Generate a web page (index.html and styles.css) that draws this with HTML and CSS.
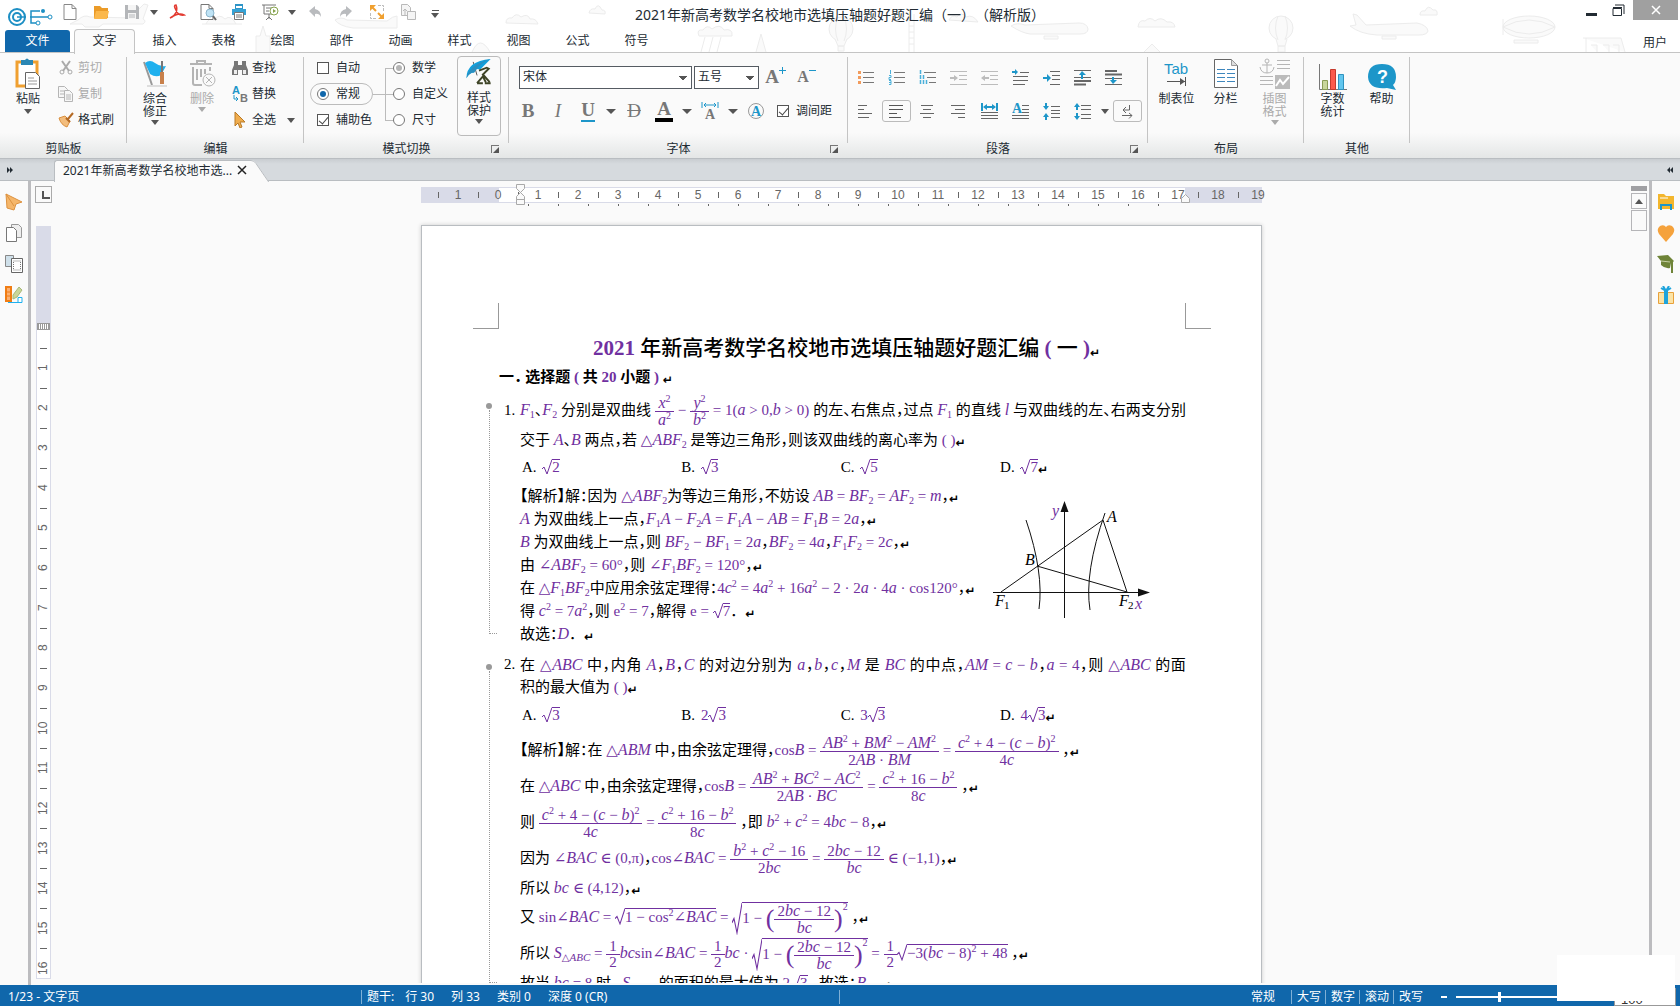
FILE: index.html
```
<!DOCTYPE html>
<html lang="zh-CN">
<head>
    <meta charset="utf-8">
    <title>2021年新高考数学名校地市选填压轴题好题汇编</title>
    <link rel="stylesheet" href="styles.css">
</head>
<body>
    <header class="top">
        <!-- 背景装饰 -->
        <svg class="doodle" width="1680" height="52" viewBox="0 0 1680 52" fill="#fafafa" stroke="#ececec">
            <path d="M78 20q6-6 12-3l44 1q4-10 10-14l4 1-5 14q4 2 0 5h-40l-4 3h-14l-3-3h-12z"/>
            <path d="M335 20q6-4 12 0l40 1q6-5 10-5v12h-44q-14-2-18-8z"/>
            <path d="M202 24h40M206 24q3-7 8-4 5-7 11-1 6-5 11 5M506 23q0-6 6-5 4-6 9-1 7-4 9 2 6-1 8 5z"/>
            <path d="M256 52V36h4l3-10 3 10h4v16M472 52q8-18 18 0"/>
            <path d="M589 13q1-5 6-4 3-7 7 1 4 0 3 4zM699 36q-3-7 4-6 4-6 9-1 8-6 12 1 9-2 8 6z"/>
            <path d="M705 37l-4 15M713 37l-4 15M721 37l-4 15M756 52l5-18 5 18"/>
            <circle cx="841" cy="29" r="12"/><path d="M835 39l3 7h6l3-7M838 17q-5 12 0 24M844 17q5 12 0 24M838 46h6v5h-6z"/>
            <path d="M909 14v38M914 14v38M909 20h5M909 26h5M909 32h5M909 38h5M909 44h5M949 20q3-6 8-3 4-6 9 0 7-3 12 5z"/>
            <path d="M1011 26q6-4 14-1l54-2q8 0 9 6 0 5-8 5h-50q-8-1-19-8zM1044 36h14v3h-14z"/>
            <path d="M1138 27q1-8 7-6 5-5 10 0 6-5 12 1 7-1 8 5zM1144 52l8-8 8 8"/>
            <circle cx="1281" cy="28" r="12"/><path d="M1276 39l2 7h7l2-7M1278 16q-5 12 0 24M1285 16q5 12 0 24M1278 46h7v6h-7z"/>
            <path d="M1350 26l6-1-3-11 4 1 9 10 51-2q10 2 11 8-1 4-9 4h-42q-17-1-27-9zM1382 36h14v3h-14z"/>
            <path d="M1420 15q0-5 5-4 3-7 8-1 5-1 4 5z"/>
            <ellipse cx="1529" cy="27" rx="26" ry="11"/><path d="M1503 27q26-14 52 0M1503 27q26 14 52 0M1514 40h24v3h-24zM1503 19v16"/>
            <path d="M1583 38h38l4 14M1586 38v14M1591 45h6v7M1603 45h6v7M1613 45h6v7"/>
        </svg>

        <div class="titlebar">
            <svg class="logo" width="46" height="20" viewBox="0 0 46 20" fill="none" stroke="#1d8fc4" stroke-width="2">
                <circle cx="10" cy="10" r="8"/><circle cx="10" cy="10" r="4"/><path d="M10 10h9M23 10h20M33 4h-9v12h7" stroke-width="1.500"/>
                <circle cx="36" cy="4" r="2" fill="#1d8fc4" stroke="none"/><circle cx="31" cy="16" r="2" fill="#fff" stroke-width="1"/><circle cx="43" cy="10" r="2" fill="#fff" stroke-width="1"/>
            </svg>
            <button class="quick" title="新建"><svg width="16" height="18"><path d="M2 1.500h8l4 4v11H2zM10 1.500v4h4" fill="#fff" stroke="#888"/></svg></button>
            <button class="quick" title="打开"><svg width="18" height="18"><path d="M2 15V3h6l2 2h6v10z" fill="#eb9b28"/><path d="M4 8h13l-2 8H2z" fill="#fbb84c"/></svg></button>
            <button class="quick" title="保存"><svg width="18" height="18"><path d="M2 2h12l2 2v12H2z" fill="#b4b6b9"/><path d="M5 2h8v5H5zM5 10h8v6H5z" fill="#f5f5f5"/><path d="M6 12h6M6 14h6" stroke="#b4b6b9"/></svg></button>
            <button class="caret-btn" title="更多"><i class="caret"></i></button>
            <button class="quick" title="PDF"><svg width="18" height="18"><path d="M2 15C8 13 10 7 8 2q-3 0 0 5 2 6 8 5-5-3-14 3z" fill="none" stroke="#e33b31" stroke-width="1.500"/></svg></button>
            <button class="quick" title="预览"><svg width="18" height="18"><path d="M2 1.500h8l4 4v11H2zM10 1.500v4h4" fill="#fff" stroke="#777"/><circle cx="11" cy="10" r="4" fill="#bfe3f5" stroke="#8cb5cc"/><path d="M14 13l3 4" stroke="#666" stroke-width="2"/></svg></button>
            <button class="quick" title="打印"><svg width="18" height="18"><path d="M5 1h8v5H5z" fill="#2d94c7"/><path d="M6 3h6v2H6z" fill="#fff"/><path d="M2 6h14v6H2z" fill="#35a2d5"/><path d="M4.500 9.500h9v7h-9z" fill="#fff" stroke="#777"/><path d="M6 12h6M6 14h6" stroke="#777"/></svg></button>
            <button class="quick" title="播放"><svg width="18" height="18"><path d="M1 2h14M3 2v9h8M8 11v5M5 17l3-3 3 3M5 5h6M5 8h3" fill="none" stroke="#777"/><circle cx="13" cy="8" r="4" fill="#fff" stroke="#86a34c"/><path d="M12 6l3 2-3 2z" fill="#86a34c"/></svg></button>
            <button class="caret-btn" title="更多"><i class="caret"></i></button>
            <button class="quick" title="撤销"><svg width="16" height="16"><path d="M2 7l6-5v3q6 1 6 8-2-4-6-3v3z" fill="#b9bbbe"/></svg></button>
            <button class="quick" title="恢复"><svg width="16" height="16"><path d="M14 7L8 2v3q-6 1-6 8 2-4 6-3v3z" fill="#b9bbbe"/></svg></button>
            <button class="quick" title="全屏"><svg width="16" height="16"><path d="M9 1.500h5.500V7M1.500 9v5.500H7" fill="none" stroke="#bbb" stroke-dasharray="3 1"/><path d="M3 3l4 4M9 9l4 4" stroke="#f0a030" stroke-width="2"/><path d="M1 1h6L1 7zM15 15H9l6-6z" fill="#f0a030"/></svg></button>
            <button class="quick" title="导出"><svg width="18" height="18"><path d="M2.500 1.500h6l3 3v8h-9z" fill="#f5f5f5" stroke="#b9b9b9"/><path d="M8.500 8.500h8v8h-8z" fill="#f5f5f5" stroke="#b9b9b9"/><path d="M6 12V6M4 8l2-2 2 2" fill="none" stroke="#b9b9b9"/></svg></button>
            <button class="caret-btn custom" title="自定义"><i class="caret"></i></button>
            <h1 class="app-title">2021年新高考数学名校地市选填压轴题好题汇编（一）（解析版）</h1>
            <div class="window-buttons">
                <button title="最小化"><svg width="12" height="12"><path d="M0 9h11v3H0z" fill="#222b33"/></svg></button>
                <button title="还原"><svg width="13" height="13"><path d="M1 4.500h8.500v7H1zM1 3.500h9M3 1h9v9" fill="none" stroke="#222b33"/></svg></button>
                <button class="close" title="关闭"><svg width="10" height="10"><path d="M1 1l8 8M9 1l-8 8" stroke="#fff" stroke-width="1.500"/></svg></button>
            </div>
        </div>

        <nav class="tabs">
            <a class="file" href="#">文件</a>
            <a class="active" href="#">文字</a>
            <a href="#">插入</a>
            <a href="#">表格</a>
            <a href="#">绘图</a>
            <a href="#">部件</a>
            <a href="#">动画</a>
            <a href="#">样式</a>
            <a href="#">视图</a>
            <a href="#">公式</a>
            <a href="#">符号</a>
            <a class="user" href="#">用户</a>
        </nav>
    </header>

    <section class="ribbon">
        <div class="group clipboard">
            <div class="group-body">
                <button class="big">
                    <svg width="28" height="32" viewBox="0 0 28 32"><path d="M3 4h20v24H3z" fill="#fff" stroke="#f0a030" stroke-width="3"/><path d="M7 2h4q2-3 4 0h4v5H7z" fill="#2b87b4"/><path d="M11.500 14.500h10l4 4v12h-14z" fill="#fff" stroke="#666"/><path d="M14 20h6M14 23h9M14 26h9" stroke="#999"/></svg>
                    <span>粘贴</span><i class="caret"></i>
                </button>
                <div class="small-list">
                    <button class="small off"><svg width="18" height="16"><path d="M5 1l7 10M13 1L6 11" stroke="#aaa" stroke-width="2"/><circle cx="5" cy="12" r="2" fill="none" stroke="#aaa"/><circle cx="13" cy="12" r="2" fill="none" stroke="#aaa"/></svg>剪切</button>
                    <button class="small off"><svg width="18" height="16"><path d="M1.500.500h6l3 3v8h-9z" fill="#f7f7f7" stroke="#b5b5b5"/><path d="M7.500 4.500h5l3 3v8h-8z" fill="#f7f7f7" stroke="#b5b5b5"/><path d="M3 5h4M3 8h4M9 9h5M9 11h5M9 13h5" stroke="#b5b5b5"/></svg>复制</button>
                    <button class="small"><svg width="18" height="16"><path d="M2 6l6-2 5 5-3 6Q4 13 2 6z" fill="#f3bd7d" stroke="#d98f3e"/><path d="M9 6l4 4M11 7l5-6" stroke="#b56a24" stroke-width="2"/></svg>格式刷</button>
                </div>
            </div>
            <div class="group-label">剪贴板</div>
        </div>

        <div class="group edit">
            <div class="group-body">
                <button class="big">
                    <svg width="28" height="32" viewBox="0 0 28 32"><path d="M3 4l8 23" stroke="#999" stroke-width="2"/><path d="M4 5q5-4 10 0t11 3l-5 9q-5 3-11-1z" fill="#1fb0ee"/><path d="M19 14h4v12h-4z" fill="#c8804b"/><path d="M21 3v11" stroke="#777" stroke-width="2"/><path d="M6 28h20" stroke="#ddd" stroke-width="2"/></svg>
                    <span>综合<br>修正</span><i class="caret"></i>
                </button>
                <button class="big off">
                    <svg width="28" height="32" viewBox="0 0 28 32" fill="none" stroke="#b4b4b4" stroke-width="2"><path d="M2 6h22M9 6V3h8v3M5 9v16q0 2 2 2h7M9 11v11M13 11v8M17 11v5M22 9v4"/><circle cx="21" cy="22" r="6" fill="#fafafa" stroke-width="1"/><path d="M18 19l6 6M24 19l-6 6" stroke-width="1"/></svg>
                    <span>删除</span><i class="caret"></i>
                </button>
                <div class="small-list">
                    <button class="small"><svg width="18" height="16"><path d="M3 1h4v4h4V1h4v4l2 5v5h-6v-5H7v5H1v-5l2-5z" fill="#777"/><path d="M3 10h3v4H3zM12 10h3v4h-3z" fill="#eee"/></svg>查找</button>
                    <button class="small"><svg width="18" height="18"><text x="1" y="9" class="glyph blue">A</text><text x="9" y="17" class="glyph">B</text><path d="M3 10v4h4M5 12l2 2-2 2" fill="none" stroke="#1d96c9"/></svg>替换</button>
                    <button class="small"><svg width="18" height="16"><path d="M4 0v14l3-3 2 5 2-1-2-5h5z" fill="#f0ad4e" stroke="#b97a26"/></svg>全选<i class="caret"></i></button>
                </div>
            </div>
            <div class="group-label">编辑</div>
        </div>

        <div class="group mode">
            <div class="group-body">
                <div class="mode-left">
                    <label><input type="checkbox">自动</label>
                    <label class="pill"><input type="radio" name="mode" checked>常规</label>
                    <label><input type="checkbox" checked>辅助色</label>
                </div>
                <svg class="branch" width="25" height="78" fill="none" stroke="#bbb"><path d="M0 39.500h25M12.500 13v53M12.500 13.500h12M12.500 65.500h12"/></svg>
                <div class="mode-right">
                    <label><input class="dim" type="radio" name="sub" checked>数学</label>
                    <label><input type="radio" name="sub">自定义</label>
                    <label><input type="radio" name="sub">尺寸</label>
                </div>
                <button class="big boxed">
                    <svg width="28" height="32" viewBox="0 0 28 32"><path d="M8 4l4 14" stroke="#555"/><path d="M1 21Q1 3 26 1L15 12q-4-2-6 3-5 0-8 6z" fill="#12a0dc"/><path d="M26 1Q14 6 9 15q-5 0-8 6Q3 7 26 1z" fill="#2b8fc0"/><path d="M14 13l8-3 2 1-6 6 7 8M12 26l6-7 3 6M12 26h6M20 26h6" fill="none" stroke="#3e4426" stroke-width="2"/></svg>
                    <span>样式<br>保护</span><i class="caret"></i>
                </button>
            </div>
            <div class="group-label">模式切换<button class="launch" title="更多设置"></button></div>
        </div>

        <div class="group font">
            <div class="group-rows">
                <div class="tool-row">
                    <select class="font-name" aria-label="字体"><option>宋体</option></select>
                    <select class="font-size" aria-label="字号"><option>五号</option></select>
                    <button class="tool grow" title="增大"><b>A</b><svg width="7" height="7"><path d="M0 3.500h7M3.500 0v7" stroke="#1d96c9"/></svg></button>
                    <button class="tool grow shrink" title="减小"><b>A</b><svg width="7" height="7"><path d="M0 3.500h7" stroke="#1d96c9"/></svg></button>
                </div>
                <div class="tool-row spaced">
                    <button class="tool sp" title="加粗"><b>B</b></button>
                    <button class="tool sp" title="倾斜"><em>I</em></button>
                    <button class="tool" title="下划线"><b class="under">U</b></button>
                    <i class="caret"></i>
                    <button class="tool sp" title="删除线"><b class="strike">D</b></button>
                    <button class="tool" title="颜色"><b class="color">A</b></button>
                    <i class="caret"></i>
                    <button class="tool" title="字间距"><svg width="18" height="18"><path d="M1 0v6M17 0v6M3 3h12M5 1L3 3l2 2M13 1l2 2-2 2" fill="none" stroke="#1d96c9"/><text x="4" y="17" class="glyph serif">A</text></svg></button>
                    <i class="caret"></i>
                    <button class="tool sp" title="带圈字符"><svg width="18" height="18"><circle cx="9" cy="9" r="7.500" fill="none" stroke="#999"/><text x="4" y="14" class="glyph serif blue">A</text></svg></button>
                    <label class="spacing"><input type="checkbox" checked>调间距</label>
                </div>
            </div>
            <div class="group-label">字体<button class="launch" title="更多设置"></button></div>
        </div>

        <div class="group para">
            <div class="group-rows">
                <div class="tool-row icons">
                    <button title="项目符号"><svg width="17" height="17"><path d="M6 3.500h11M6 8.500h11M6 13.500h11" stroke="#777"/><path d="M1 2h3v3H1zM1 7h3v3H1zM1 12h3v3H1z" fill="#f29b5c"/></svg></button>
                    <button title="编号"><svg width="17" height="17"><path d="M6 3.500h11M6 8.500h11M6 13.500h11" stroke="#777"/><path d="M2.500 1v4M1 6.500h2v2H1v2h2M1 11.500h2v4H1M1 13.500h2" fill="none" stroke="#4ab0da"/></svg></button>
                    <button title="多级编号"><svg width="17" height="17"><path d="M5 3.500h12M8 8.500h9M10 13.500h7" stroke="#777"/><path d="M1.500 1v4M1.500 6v4M4.500 6v4M1.500 11v4M4.500 11v4M7.500 11v4" stroke="#4ab0da" stroke-width="1.500"/></svg></button>
                    <button title="减少缩进"><svg width="17" height="17"><path d="M0 2.500h17M9 6.500h8M9 10.500h8M0 15.500h17" stroke="#bcbcbc"/><path d="M0 8h4V6l4 3-4 3v-2H0z" fill="#bcbcbc"/></svg></button>
                    <button title="增加缩进"><svg width="17" height="17"><path d="M0 2.500h17M9 6.500h8M9 10.500h8M0 15.500h17" stroke="#bcbcbc"/><path d="M8 8H4V6L0 9l4 3v-2h4z" fill="#bcbcbc"/></svg></button>
                    <button title="首行"><svg width="17" height="17"><path d="M8 3.500h9M1 7.500h15M1 11.500h15M1 15.500h12" stroke="#666"/><path d="M0 2h3V0l3 3-3 3V4H0z" fill="#1d96c9"/></svg></button>
                    <button title="悬挂"><svg width="17" height="17"><path d="M7 2.500h10M9 6.500h8M9 10.500h8M7 15.500h10" stroke="#666"/><path d="M0 8h4V5l4 4-4 4v-3H0z" fill="#1d96c9"/></svg></button>
                    <button title="段前"><svg width="17" height="17"><path d="M0 1.500h17M0 8.500h17" stroke="#666"/><path d="M0 12h17M0 15.500h12" stroke="#666" stroke-width="2"/><path d="M7 10V6H5l3-4 4 4H9v4z" fill="#1d96c9"/></svg></button>
                    <button title="段后"><svg width="17" height="17"><path d="M0 2h12M0 5.500h17" stroke="#666" stroke-width="2"/><path d="M0 9.500h17M0 15.500h17" stroke="#666"/><path d="M7 8v3H5l3 4 4-4H9V8z" fill="#1d96c9"/></svg></button>
                </div>
                <div class="tool-row icons">
                    <button title="两端对齐"><svg width="17" height="17"><path d="M1 2.500h9M1 6.500h6M1 10.500h14M1 14.500h11" stroke="#666"/></svg></button>
                    <button class="boxed" title="左对齐"><svg width="17" height="17"><path d="M1 2.500h14M1 6.500h14M1 10.500h8M1 14.500h12" stroke="#555"/></svg></button>
                    <button title="居中"><svg width="17" height="17"><path d="M2 2.500h12M4 6.500h8M1 10.500h14M4 14.500h8" stroke="#666"/></svg></button>
                    <button title="右对齐"><svg width="17" height="17"><path d="M1 2.500h14M5 6.500h10M1 10.500h14M8 14.500h7" stroke="#666"/></svg></button>
                    <button title="分散"><svg width="17" height="17"><path d="M1 0v8M16 0v8" stroke="#1d96c9" stroke-width="2"/><path d="M2 4l4-3v2h5V1l4 3-4 3V5H6v2z" fill="#1d96c9"/><path d="M0 9.500h17M0 12.500h17M0 15.500h17" stroke="#666"/></svg></button>
                    <button title="首字"><svg width="17" height="17"><text x="0" y="10" class="glyph serif blue">A</text><path d="M10 2.500h7M10 6.500h7M10 9.500h7M0 12.500h17M0 15.500h17" stroke="#666"/></svg></button>
                    <button title="行距缩小"><svg width="17" height="17"><path d="M8 3.500h9M8 7.500h9M8 10.500h9M8 14.500h9" stroke="#666"/><path d="M2 0h2v3h2L3 7 0 3h2zM2 17h2v-3h2l-3-4-3 4h2z" fill="#1d96c9"/></svg></button>
                    <button title="行距扩大"><svg width="17" height="17"><path d="M7 2.500h10M7 6.500h10M7 11.500h10M7 15.500h10" stroke="#666"/><path d="M2 7h2V4h2L3 0 0 4h2zM2 10h2v3h2l-3 4-3-4h2z" fill="#1d96c9"/></svg></button>
                    <i class="caret"></i>
                    <button class="boxed" title="显示标记"><svg width="17" height="17"><path d="M10.500 2v5H4M7 4L4 7l3 3M3 12.500h10M10 10l3 2.500-3 3" fill="none" stroke="#666"/></svg></button>
                </div>
            </div>
            <div class="group-label">段落<button class="launch" title="更多设置"></button></div>
        </div>

        <div class="group layout">
            <div class="group-body">
                <button class="big">
                    <svg width="28" height="32" viewBox="0 0 28 32"><text x="1" y="16" class="tab-glyph">Tab</text><path d="M4 23.500h18M22.500 19v9" stroke="#555"/><path d="M17 20l5 3.500-5 3.500z" fill="#555"/></svg>
                    <span>制表位</span>
                </button>
                <button class="big">
                    <svg width="28" height="32" viewBox="0 0 28 32"><path d="M2.500 1.500h17l6 6v22h-23z" fill="#fff" stroke="#666"/><path d="M19.500 1.500v6h6z" fill="#ddd" stroke="#999"/><path d="M5 11.500h8M15 11.500h8M5 15.500h8M15 15.500h8M5 19.500h8M15 19.500h8M5 23.500h8M15 23.500h8" stroke="#3f87bd"/></svg>
                    <span>分栏</span>
                </button>
                <button class="big off">
                    <svg width="32" height="32" viewBox="0 0 32 32" fill="none" stroke="#b5b5b5"><circle cx="8" cy="3" r="2"/><path d="M8 5v10M3 7h10M1 9q1 6 7 6t7-6M18 2.500h13M18 6.500h13M18 10.500h13M1 18.500h13M1 22.500h13M1 26.500h13"/><path d="M16 17h15v14H16z" fill="#bbb" stroke="none"/><path d="M17 28l4-6 3 4 6-7" stroke="#fff" stroke-width="2"/></svg>
                    <span>插图<br>格式</span><i class="caret"></i>
                </button>
            </div>
            <div class="group-label">布局</div>
        </div>

        <div class="group other">
            <div class="group-body">
                <button class="big">
                    <svg width="30" height="32" viewBox="0 0 30 32"><path d="M1.500 6v25.500H29" fill="none" stroke="#777"/><path d="M4.500 22.500h5v9h-5z" fill="#c9d69b" stroke="#8a9d54"/><path d="M12.500 11.500h5v20h-5z" fill="#fb5a4c" stroke="#c53a2c"/><path d="M20.500 16.500h5v15h-5z" fill="#62c6ee" stroke="#2f93bf"/></svg>
                    <span>字数<br>统计</span>
                </button>
                <button class="big">
                    <svg width="30" height="32" viewBox="0 0 30 32"><path d="M15 6q14 0 14 13 0 5-3 8l3 5-9-2q-18 2-19-11Q1 6 15 6z" fill="#1d96c9"/><text x="10" y="25" class="help-glyph">?</text></svg>
                    <span>帮助</span>
                </button>
            </div>
            <div class="group-label">其他</div>
        </div>
    </section>

    <div class="doc-tabs">
        <button title="展开"><svg width="8" height="8"><path d="M1 1l3 3-3 3zM4 1l3 3-3 3z" fill="#222b33"/></svg></button>
        <div class="doc-tab">
            <a href="#">2021年新高考数学名校地市选...</a>
            <button title="关闭"><svg width="10" height="10"><path d="M1 1l8 8M9 1l-8 8" stroke="#222" stroke-width="1.500"/></svg></button>
        </div>
        <svg class="slope" width="18" height="22"><path d="M0 0q3 0 5 3l13 19H0z" fill="#fafafa"/><path d="M0 .500q3 0 5 3l13 19" fill="none" stroke="#b9bdc1"/></svg>
        <button class="right" title="展开"><svg width="8" height="8"><path d="M4 1v6L1 4zM7 1v6L4 4z" fill="#222b33"/></svg></button>
    </div>

    <main class="workspace">
        <aside class="side">
            <button title="导航"><svg width="18" height="18"><path d="M1 1l16 8-6 2-2 6-7-2z" fill="#f5b66a" stroke="#dd9240"/><path d="M1 1l8 12" stroke="#dd9240"/></svg></button>
            <button title="页面"><svg width="18" height="18"><path d="M6.500.500h7l3 3v10h-10z" fill="#eee" stroke="#999"/><path d="M1.500 3.500h7l3 3v11h-10z" fill="#fff" stroke="#777"/></svg></button>
            <button title="选区"><svg width="18" height="18"><path d="M.500.500h8v11h-8z" fill="#cfe0ea" stroke="#888"/><path d="M6.500 3.500h11v14h-11z" fill="#fff" stroke="#666"/><path d="M8.500 6h7v9h-7z" fill="none" stroke="#777" stroke-dasharray="1 1"/></svg></button>
            <button title="素材"><svg width="18" height="18"><path d="M1 1h5v14H1z" fill="#fbb072" stroke="#f07d14" stroke-width="2"/><path d="M1 6h5M1 10h5" stroke="#f07d14"/><path d="M8 9l6-8 3 3-5 7-4 2z" fill="#c9d69b" stroke="#a9b978"/><path d="M3 16.500h14v-5h-4v5" fill="#fff" stroke="#1fb0ee"/></svg></button>
        </aside>

        <div class="v-side">
            <div class="corner"></div>
            <div class="v-ruler">
                <div class="v-margin"></div>
                <i></i><span>1</span><i></i><span>2</span><i></i><span>3</span><i></i><span>4</span>
                <i></i><span>5</span><i></i><span>6</span><i></i><span>7</span><i></i><span>8</span>
                <i></i><span>9</span><i></i><span>10</span><i></i><span>11</span><i></i><span>12</span>
                <i></i><span>13</span><i></i><span>14</span><i></i><span>15</span><i></i><span>16</span>
            </div>
        </div>

        <div class="canvas">
            <div class="h-ruler">
                <div class="h-cells">
                    <i></i><span>1</span><i></i><span>0</span><i></i><span>1</span><i></i><span>2</span><i></i><span>3</span>
                    <i></i><span>4</span><i></i><span>5</span><i></i><span>6</span><i></i><span>7</span><i></i><span>8</span>
                    <i></i><span>9</span><i></i><span>10</span><i></i><span>11</span><i></i><span>12</span><i></i><span>13</span>
                    <i></i><span>14</span><i></i><span>15</span><i></i><span>16</span><i></i><span>17</span><i></i><span>18</span>
                    <i></i><span>19</span>
                </div>
                <svg class="indent first" width="10" height="22" fill="#fafafa" stroke="#a9a9a9"><path d="M.500.500h8v4l-4 4-4-4zM4.500 8.500l4 4v3h-8v-3zM.500 15.500h8v5h-8z"/></svg>
                <svg class="indent last" width="10" height="10" fill="#fafafa" stroke="#a9a9a9"><path d="M4.500.500l4 4v4h-8v-4z"/></svg>
            </div>
            <div class="tab-stops"></div>

            <article class="paper">
                <div class="crops"><i></i><i></i></div>
                <h2><span class="m">2021</span> 年新高考数学名校地市选填压轴题好题汇编 <span class="m">(</span> 一 <span class="m">)</span><s>↵</s></h2>
                <h3>一． 选择题 <span class="m">(</span> 共 <span class="m">20</span> 小题 <span class="m">)</span> <s>↵</s></h3>

                <section class="question">
                    <p class="tall full"><span class="num">1.</span><span class="m"><i>F</i><sub>1</sub></span>、<span class="m"><i>F</i><sub>2</sub></span> 分别是双曲线 <span class="m"><span class="frac"><span><i>x</i><sup>2</sup></span><span><i>a</i><sup>2</sup></span></span> − <span class="frac"><span><i>y</i><sup>2</sup></span><span><i>b</i><sup>2</sup></span></span> = 1(<i>a</i> &gt; 0,<i>b</i> &gt; 0)</span> 的左、右焦点，过点 <span class="m"><i>F</i><sub>1</sub></span> 的直线 <span class="m"><i>l</i></span> 与双曲线的左、右两支分别</p>
                    <p>交于 <span class="m"><i>A</i></span>、<span class="m"><i>B</i></span> 两点，若 <span class="m">△<i>ABF</i><sub>2</sub></span> 是等边三角形，则该双曲线的离心率为 <span class="m">( )</span><s>↵</s></p>
                    <ul class="options">
                        <li>A. <span class="m"><span class="root"><svg viewBox="0 0 10 16" preserveAspectRatio="none"><path d="M0 10l2-2 3 7L10 .500"/></svg><span>2</span></span></span></li>
                        <li>B. <span class="m"><span class="root"><svg viewBox="0 0 10 16" preserveAspectRatio="none"><path d="M0 10l2-2 3 7L10 .500"/></svg><span>3</span></span></span></li>
                        <li>C. <span class="m"><span class="root"><svg viewBox="0 0 10 16" preserveAspectRatio="none"><path d="M0 10l2-2 3 7L10 .500"/></svg><span>5</span></span></span></li>
                        <li>D. <span class="m"><span class="root"><svg viewBox="0 0 10 16" preserveAspectRatio="none"><path d="M0 10l2-2 3 7L10 .500"/></svg><span>7</span></span></span><s>↵</s></li>
                    </ul>
                    <div class="with-figure">
                        <div>
                            <p><b>【</b>解析<b>】</b>解：因为 <span class="m">△<i>ABF</i><sub>2</sub></span>为等边三角形，不妨设 <span class="m"><i>AB</i> = <i>BF</i><sub>2</sub> = <i>AF</i><sub>2</sub> = <i>m</i></span>，<s>↵</s></p>
                            <p><span class="m"><i>A</i></span> 为双曲线上一点，<span class="m"><i>F</i><sub>1</sub><i>A</i> − <i>F</i><sub>2</sub><i>A</i> = <i>F</i><sub>1</sub><i>A</i> − <i>AB</i> = <i>F</i><sub>1</sub><i>B</i> = 2<i>a</i></span>，<s>↵</s></p>
                            <p><span class="m"><i>B</i></span> 为双曲线上一点，则 <span class="m"><i>BF</i><sub>2</sub> − <i>BF</i><sub>1</sub> = 2<i>a</i></span>，<span class="m"><i>BF</i><sub>2</sub> = 4<i>a</i></span>，<span class="m"><i>F</i><sub>1</sub><i>F</i><sub>2</sub> = 2<i>c</i></span>，<s>↵</s></p>
                            <p>由 <span class="m">∠<i>ABF</i><sub>2</sub> = 60°</span>，则 <span class="m">∠<i>F</i><sub>1</sub><i>BF</i><sub>2</sub> = 120°</span>，<s>↵</s></p>
                            <p>在 <span class="m">△<i>F</i><sub>1</sub><i>BF</i><sub>2</sub></span>中应用余弦定理得：<span class="m">4<i>c</i><sup>2</sup> = 4<i>a</i><sup>2</sup> + 16<i>a</i><sup>2</sup> − 2 · 2<i>a</i> · 4<i>a</i> · cos120°</span>，<s>↵</s></p>
                            <p>得 <span class="m"><i>c</i><sup>2</sup> = 7<i>a</i><sup>2</sup></span>，则 <span class="m">e<sup>2</sup> = 7</span>，解得 <span class="m">e = <span class="root"><svg viewBox="0 0 10 16" preserveAspectRatio="none"><path d="M0 10l2-2 3 7L10 .500"/></svg><span>7</span></span></span>．&ensp;<s>↵</s></p>
                            <p>故选：<span class="m"><i>D</i></span>．&ensp;<s>↵</s></p>
                        </div>
                        <svg class="figure" width="160" height="122" fill="none" stroke="#111">
                            <path d="M1 93.500h150M72.500 8v111"/>
                            <path d="M72.500 2l4 11h-8zM158 93.500l-12-4v8z" fill="#111" stroke="none"/>
                            <path d="M34 21Q52 74 47 110M113 14Q92 74 98 111M9 93L111 21 135 93 45 67"/>
                            <text x="60" y="17" class="p">y</text><text x="115" y="23">A</text><text x="33" y="66">B</text>
                            <text x="3" y="107">F</text><text x="12" y="110" class="s">1</text>
                            <text x="127" y="107">F</text><text x="136" y="110" class="s">2</text><text x="143" y="110" class="p">x</text>
                        </svg>
                    </div>
                </section>

                <section class="question">
                    <p class="full"><span class="num">2.</span>在 <span class="m">△<i>ABC</i></span> 中，内角 <span class="m"><i>A</i></span>，<span class="m"><i>B</i></span>，<span class="m"><i>C</i></span> 的对边分别为 <span class="m"><i>a</i></span>，<span class="m"><i>b</i></span>，<span class="m"><i>c</i></span>，<span class="m"><i>M</i></span> 是 <span class="m"><i>BC</i></span> 的中点，<span class="m"><i>AM</i> = <i>c</i> − <i>b</i></span>，<span class="m"><i>a</i> = 4</span>，则 <span class="m">△<i>ABC</i></span> 的面</p>
                    <p>积的最大值为 <span class="m">( )</span><s>↵</s></p>
                    <ul class="options">
                        <li>A. <span class="m"><span class="root"><svg viewBox="0 0 10 16" preserveAspectRatio="none"><path d="M0 10l2-2 3 7L10 .500"/></svg><span>3</span></span></span></li>
                        <li>B. <span class="m">2<span class="root"><svg viewBox="0 0 10 16" preserveAspectRatio="none"><path d="M0 10l2-2 3 7L10 .500"/></svg><span>3</span></span></span></li>
                        <li>C. <span class="m">3<span class="root"><svg viewBox="0 0 10 16" preserveAspectRatio="none"><path d="M0 10l2-2 3 7L10 .500"/></svg><span>3</span></span></span></li>
                        <li>D. <span class="m">4<span class="root"><svg viewBox="0 0 10 16" preserveAspectRatio="none"><path d="M0 10l2-2 3 7L10 .500"/></svg><span>3</span></span></span><s>↵</s></li>
                    </ul>
                    <p class="tall"><b>【</b>解析<b>】</b>解：在 <span class="m">△<i>ABM</i></span> 中，由余弦定理得，<span class="m">cos<i>B</i> = <span class="frac"><span><i>AB</i><sup>2</sup> + <i>BM</i><sup>2</sup> − <i>AM</i><sup>2</sup></span><span>2<i>AB</i> · <i>BM</i></span></span> = <span class="frac"><span><i>c</i><sup>2</sup> + 4 − (<i>c</i> − <i>b</i>)<sup>2</sup></span><span>4<i>c</i></span></span></span> ，<s>↵</s></p>
                    <p class="tall">在 <span class="m">△<i>ABC</i></span> 中，由余弦定理得，<span class="m">cos<i>B</i> = <span class="frac"><span><i>AB</i><sup>2</sup> + <i>BC</i><sup>2</sup> − <i>AC</i><sup>2</sup></span><span>2<i>AB</i> · <i>BC</i></span></span> = <span class="frac"><span><i>c</i><sup>2</sup> + 16 − <i>b</i><sup>2</sup></span><span>8<i>c</i></span></span></span> ，<s>↵</s></p>
                    <p class="tall">则 <span class="m"><span class="frac"><span><i>c</i><sup>2</sup> + 4 − (<i>c</i> − <i>b</i>)<sup>2</sup></span><span>4<i>c</i></span></span> = <span class="frac"><span><i>c</i><sup>2</sup> + 16 − <i>b</i><sup>2</sup></span><span>8<i>c</i></span></span></span> ，即 <span class="m"><i>b</i><sup>2</sup> + <i>c</i><sup>2</sup> = 4<i>bc</i> − 8</span>，<s>↵</s></p>
                    <p class="tall">因为 <span class="m">∠<i>BAC</i> ∈ (0,π)</span>，<span class="m">cos∠<i>BAC</i> = <span class="frac"><span><i>b</i><sup>2</sup> + <i>c</i><sup>2</sup> − 16</span><span>2<i>bc</i></span></span> = <span class="frac"><span>2<i>bc</i> − 12</span><span><i>bc</i></span></span> ∈ (−1,1)</span>，<s>↵</s></p>
                    <p>所以 <span class="m"><i>bc</i> ∈ (4,12)</span>，<s>↵</s></p>
                    <p class="tall">又 <span class="m">sin∠<i>BAC</i> = <span class="root"><svg viewBox="0 0 10 16" preserveAspectRatio="none"><path d="M0 10l2-2 3 7L10 .500"/></svg><span>1 − cos<sup>2</sup>∠<i>BAC</i></span></span> = <span class="root big-root"><svg viewBox="0 0 10 16" preserveAspectRatio="none"><path d="M0 10l2-2 3 7L10 .500"/></svg><span>1 − <span class="paren">(</span><span class="frac"><span>2<i>bc</i> − 12</span><span><i>bc</i></span></span><span class="paren">)</span><sup class="high">2</sup></span></span></span> ，<s>↵</s></p>
                    <p class="tall">所以 <span class="m"><i>S</i><sub>△<i>ABC</i></sub> = <span class="frac"><span>1</span><span>2</span></span><i>bc</i>sin∠<i>BAC</i> = <span class="frac"><span>1</span><span>2</span></span><i>bc</i> · <span class="root big-root"><svg viewBox="0 0 10 16" preserveAspectRatio="none"><path d="M0 10l2-2 3 7L10 .500"/></svg><span>1 − <span class="paren">(</span><span class="frac"><span>2<i>bc</i> − 12</span><span><i>bc</i></span></span><span class="paren">)</span><sup class="high">2</sup></span></span> = <span class="frac"><span>1</span><span>2</span></span><span class="root"><svg viewBox="0 0 10 16" preserveAspectRatio="none"><path d="M0 10l2-2 3 7L10 .500"/></svg><span>−3(<i>bc</i> − 8)<sup>2</sup> + 48</span></span></span> ，<s>↵</s></p>
                    <p>故当 <span class="m"><i>bc</i> = 8</span> 时， <span class="m"><i>S</i><sub>△<i>ABC</i></sub></span>的面积的最大值为 <span class="m">2<span class="root"><svg viewBox="0 0 10 16" preserveAspectRatio="none"><path d="M0 10l2-2 3 7L10 .500"/></svg><span>3</span></span></span>． 故选：<span class="m"><i>B</i></span>．&ensp;<s>↵</s></p>
                </section>
            </article>
        </div>

        <div class="scroll">
            <div class="split"></div>
            <button title="向上"><i class="caret up"></i></button>
            <div class="thumb"></div>
        </div>

        <aside class="side right">
            <button title="文件夹"><svg width="18" height="18"><path d="M1 1h6l2 2h8v13H1z" fill="#f3b62d"/><path d="M3 5h8" stroke="#fff"/><path d="M4 17v-5h10v5" fill="none" stroke="#1d96c9" stroke-width="2"/></svg></button>
            <button title="收藏"><svg width="18" height="18"><path d="M9 18L2 10Q-1 5 3 2q4-2 6 1 2-3 6-1 4 3 1 8z" fill="#f5a23c"/></svg></button>
            <button title="学习"><svg width="18" height="18"><path d="M0 1l11-1 6 6-1 1v11h-2V8l-1 5q-5 1-9-3V6z" fill="#6f8438"/><path d="M4 6l9 1" stroke="#c5cfa3"/></svg></button>
            <button title="礼物"><svg width="18" height="18"><path d="M1.500 6.500h15v11h-15z" fill="#fbe3a6" stroke="#e9a13a"/><path d="M7 5h4v13H7z" fill="#1fa4dc"/><path d="M9 5L4 2M9 5l5-3M9 5L6 0M9 5l3-5" stroke="#1fa4dc" stroke-width="2"/></svg></button>
        </aside>
    </main>

    <footer class="status">
        <span class="page-no">1/23 - 文字页</span>
        <div class="position"><span>题干:</span><span>行 30</span><span>列 33</span><span>类别 0</span><span>深度 0 (CR)</span></div>
        <div class="state"><span class="style-name">常规</span><span>大写</span><span>数字</span><span>滚动</span><span>改写</span></div>
        <button class="minus" title="缩小"></button>
        <input class="zoom-bar" type="range" min="0" max="100" value="27" aria-label="缩放">
        <input class="zoom-value" type="text" value="100" aria-label="缩放比例">
        <div class="blank"></div>
    </footer>
</body>
</html>
```
FILE: styles.css
```
* {
    box-sizing: border-box;
}
body {
    margin: 0;
    height: 100vh;
    display: flex;
    flex-direction: column;
    overflow: hidden;
    background: #fafafa;
    color: #222b33;
    font: 12px/16px "Noto Sans", "Noto Sans CJK SC", sans-serif;
}
button {
    border: none;
    background: none;
    padding: 0;
    color: inherit;
    font: inherit;
}
svg {
    flex: none;
}
a {
    color: inherit;
    text-decoration: none;
}
.caret {
    flex: none;
    border: 4px solid transparent;
    border-top: 5px solid #555;
    border-bottom: none;
    width: 0;
    height: 0;
}
.caret.up {
    border-top: none;
    border-bottom: 5px solid #555;
}
.off {
    color: #aaa;
}
.off .caret {
    border-top-color: #aaa;
}

/* 标题栏 */
.top {
    position: relative;
    background: #fff;
    border-bottom: 1px solid #c4c4c4;
    flex: none;
}
.doodle {
    position: absolute;
    left: 0;
    top: 0;
}
.titlebar {
    position: relative;
    display: flex;
    height: 28px;
    padding-left: 7px;
}
.logo {
    margin: 7px 1px 0 0;
}
.quick {
    width: 31px;
    height: 24px;
    display: flex;
    align-items: center;
    justify-content: center;
}
.caret-btn {
    width: 14px;
    height: 24px;
    display: flex;
    align-items: center;
    justify-content: center;
}
.custom {
    width: 24px;
    flex-direction: column;
    gap: 2px;
}
.custom::before {
    content: "";
    width: 7px;
    height: 1px;
    margin-top: 4px;
    background: #555;
}
.app-title {
    position: absolute;
    left: 0;
    right: 0;
    top: 5px;
    margin: 0;
    text-align: center;
    font-size: 14px;
    line-height: 20px;
    font-weight: 400;
    text-spacing-trim: space-all;
    pointer-events: none;
}
.window-buttons {
    margin-left: auto;
    margin-right: 2px;
    display: flex;
    align-items: flex-start;
    gap: 14px;
}
.window-buttons button {
    height: 20px;
    display: flex;
    align-items: center;
    justify-content: center;
}
.window-buttons .close {
    width: 45px;
    margin-left: -6px;
    background: #a0a0a0;
}
.tabs {
    position: relative;
    display: flex;
    height: 24px;
    padding-left: 5px;
    line-height: 26px;
    text-align: center;
}
.tabs a {
    width: 59px;
}
.tabs .file {
    width: 65px;
    margin-right: 4px;
    background: #1067ab;
    color: #fff;
    border-radius: 3px 3px 0 0;
    height: 22px;
    margin-top: 2px;
    line-height: 22px;
}
.tabs .active {
    width: 61px;
    height: 25px;
    margin-top: 1px;
    margin-bottom: -1px;
    line-height: 22px;
    background: #fafafa;
    border: 1px solid #c4c4c4;
    border-bottom: none;
    border-radius: 4px 4px 0 0;
}
.tabs .user {
    width: auto;
    margin-left: auto;
    padding-right: 13px;
    line-height: 30px;
}

/* 功能区 */
.ribbon {
    display: flex;
    flex: none;
    height: 106px;
    background: linear-gradient(#fafafa 76%, #e4e6e6);
    border-bottom: 1px solid #b9bdc1;
}
.group {
    position: relative;
    display: flex;
    flex-direction: column;
    justify-content: space-between;
}
.group::after {
    content: "";
    position: absolute;
    right: 0;
    top: 4px;
    width: 1px;
    height: 86px;
    background: #c4c4c4;
}
.group-body {
    display: flex;
    height: 86px;
    padding-left: 10px;
}
.group-rows {
    padding: 12px 0 0 10px;
}
.group-label {
    position: relative;
    height: 18px;
    line-height: 18px;
    text-align: center;
}
.clipboard { width: 127px; }
.edit { width: 177px; }
.mode { width: 205px; }
.font { width: 339px; }
.para { width: 300px; }
.layout { width: 156px; }
.other { width: 106px; }
.mode .group-body {
    padding-left: 6px;
}
.layout .group-body, .other .group-body {
    padding-left: 4px;
}
.para .group-rows {
    padding-left: 2px;
}
.launch {
    position: absolute;
    right: 10px;
    top: 5px;
    width: 8px;
    height: 8px;
    border: 1px solid #777;
    border-right: none;
    border-bottom: none;
}
.launch::after {
    content: "";
    position: absolute;
    right: 0;
    bottom: 0;
    border: 3px solid #555;
    border-top-color: transparent;
    border-left-color: transparent;
}
.big {
    width: 36px;
    padding-top: 5px;
    display: flex;
    flex-direction: column;
    align-items: center;
    line-height: 13px;
}
.big span {
    margin: 2px 0;
    white-space: nowrap;
}
.clipboard .caret {
    margin-top: 2px;
}
.edit .big {
    margin-right: 11px;
}
.layout .big, .other .big {
    width: 49px;
}
.big.boxed {
    width: 44px;
    height: 80px;
    margin: 3px 0 0 11px;
    padding-top: 1px;
    border: 1px solid #bbb;
    border-radius: 4px;
}
.big.boxed svg {
    height: 31px;
}
.small-list {
    padding-top: 2px;
}
.clipboard .small-list {
    padding-left: 11px;
}
.small {
    display: flex;
    align-items: center;
    height: 26px;
    gap: 3px;
}
.small .caret {
    margin: 0 0 0 8px;
}
.glyph {
    font: bold 11px "Liberation Sans", sans-serif;
    fill: #777;
}
.serif {
    font: bold 14px "Liberation Serif", serif;
}
.blue {
    fill: #1d96c9;
}
.tab-glyph {
    font: 15px "Liberation Sans", sans-serif;
    fill: #1d96c9;
}
.help-glyph {
    font: bold 18px "Liberation Sans", sans-serif;
    fill: #fff;
}
.mode-left, .mode-right {
    padding-top: 2px;
}
.mode-left {
    width: 63px;
}
.mode label {
    display: flex;
    align-items: center;
    height: 26px;
    gap: 7px;
    white-space: nowrap;
}
.mode-left label {
    padding-left: 7px;
}
.mode .pill {
    height: 22px;
    margin: 2px 0;
    padding-left: 6px;
    border: 1px solid #bbb;
    border-radius: 11px;
}
.branch {
    margin-top: 2px;
}
.mode-right {
    width: 53px;
    margin-left: -5px;
}
input[type="checkbox"], input[type="radio"] {
    appearance: none;
    position: relative;
    flex: none;
    width: 12px;
    height: 12px;
    margin: 0;
    border: 1px solid #555;
    background: #fff;
}
input[type="radio"] {
    border-radius: 50%;
    border-color: #777;
}
input[type="radio"]:checked::after {
    content: "";
    position: absolute;
    inset: 2px;
    border-radius: 50%;
    background: #1067ab;
}
input.dim:checked::after {
    background: #b5b5b5;
}
input[type="checkbox"]:checked::after {
    content: "";
    position: absolute;
    left: 3px;
    top: 0;
    width: 4px;
    height: 8px;
    border: solid #444;
    border-width: 0 1px 1px 0;
    transform: rotate(40deg);
}
.tool-row {
    display: flex;
    align-items: center;
    height: 24px;
    margin-bottom: 10px;
}
.tool-row.spaced {
    gap: 9px;
}
.tool-row.spaced .caret {
    border-left-width: 5px;
    border-right-width: 5px;
}
.tool-row select {
    appearance: none;
    height: 23px;
    padding: 0 3px;
    border: 1px solid #555b62;
    border-radius: 0;
    background: linear-gradient(#555, #555) right 4px top 9px / 8px 1px no-repeat,
        linear-gradient(#555, #555) right 5px top 10px / 6px 1px no-repeat,
        linear-gradient(#555, #555) right 6px top 11px / 4px 1px no-repeat,
        linear-gradient(#555, #555) right 7px top 12px / 2px 1px no-repeat, #fff;
    color: inherit;
    font: inherit;
}
.font-name {
    width: 173px;
    margin-right: 2px;
}
.font-size {
    width: 65px;
}
.tool {
    display: flex;
    justify-content: center;
    width: 18px;
    height: 24px;
    align-items: center;
    font: 19px/20px "Liberation Serif", serif;
    color: #777;
}
.sp {
    margin-right: 3px;
}
.grow {
    width: 19px;
    margin-left: 7px;
    align-items: flex-start;
    padding-top: 2px;
}
.shrink {
    margin-left: 12px;
    font-size: 16px;
}
.under {
    border-bottom: 2px solid #1d96c9;
}
.strike {
    text-decoration: line-through;
    font-weight: 400;
}
.color {
    width: 18px;
    line-height: 18px;
    border-bottom: 4px solid #000;
}
.spacing {
    display: flex;
    align-items: center;
    gap: 7px;
}
.icons button {
    width: 31px;
    height: 24px;
    display: flex;
    align-items: center;
    justify-content: center;
}
.icons .boxed {
    width: 29px;
    height: 22px;
    margin: 0 1px;
    border: 1px solid #bbb;
    border-radius: 3px;
}
.icons .caret {
    margin: 0 3px;
}

/* 文档标签 */
.doc-tabs {
    display: flex;
    flex: none;
    height: 22px;
    background: linear-gradient(#c9cdd1, #d6dade 5px);
    border-bottom: 1px solid #b9bdc1;
}
.doc-tabs > button {
    width: 54px;
    padding-right: 34px;
    line-height: 8px;
}
.doc-tabs > .right {
    width: 20px;
    padding: 0;
    margin-left: auto;
}
.doc-tab {
    display: flex;
    height: 22px;
    padding: 0 4px 2px 8px;
    margin-top: 1px;
    align-items: center;
    gap: 5px;
    background: #fafafa;
    border: 1px solid #b9bdc1;
    border-width: 1px 0 0 1px;
    border-radius: 3px 0 0 0;
}
.doc-tab button {
    line-height: 10px;
    width: 10px;
}
.slope {
    margin-top: 1px;
}

/* 工作区 */
.workspace {
    display: flex;
    flex: 1;
    min-height: 0;
}
.side {
    width: 31px;
    flex: none;
    display: flex;
    flex-direction: column;
    gap: 13px;
    padding: 12px 0 0 5px;
    border-right: 3px solid #bcbcbf;
}
.side.right {
    border-right: none;
    border-left: 3px solid #bcbcbf;
}
.side button {
    width: 18px;
    height: 18px;
}
.side svg {
    display: block;
}
.v-side {
    width: 25px;
    flex: none;
    padding: 5px 4px 0;
    overflow: hidden;
    border-bottom: 2px solid #fafafa;
}
.corner {
    position: relative;
    width: 17px;
    height: 17px;
    border: 1px solid #aaa;
}
.corner::after {
    content: "";
    position: absolute;
    left: 6px;
    top: 4px;
    width: 6px;
    height: 6px;
    border: solid #555;
    border-width: 0 0 2px 2px;
}
.v-ruler, .h-ruler {
    color: #666;
    font: 12px/20px "Liberation Sans", sans-serif;
}
.v-ruler {
    width: 15px;
    margin: 23px 0 0 1px;
    display: flex;
    flex-direction: column;
    border: 1px solid #d9dbe8;
    background: #fff;
}
.v-margin {
    position: relative;
    flex: none;
    height: 103px;
    margin-bottom: 8px;
    background: #d9dbe8;
}
.v-margin::after {
    content: "";
    position: absolute;
    left: 0;
    right: 0;
    bottom: 0;
    height: 5px;
    border: 1px solid #999;
    background: repeating-linear-gradient(90deg, #999 0 1px, #fff 1px 2px);
}
.v-ruler span {
    flex: none;
    height: 20px;
    line-height: 13px;
    writing-mode: vertical-rl;
    transform: rotate(180deg);
    text-align: center;
}
.v-ruler i {
    flex: none;
    height: 1px;
    width: 7px;
    margin: 10px 3px 9px;
    background: #666;
}
.canvas {
    flex: 1;
    overflow: hidden;
    border-bottom: 2px solid #fafafa;
    display: flex;
    flex-direction: column;
    align-items: center;
}
.h-ruler {
    position: relative;
    flex: none;
    width: 841px;
    height: 16px;
    margin-top: 6px;
    border: solid #d9dbe8;
    border-width: 1px 77px 1px 78px;
    background: #fff;
}
.h-cells {
    display: flex;
    margin-left: -71px;
    line-height: 14px;
}
.h-cells span {
    flex: none;
    width: 20px;
    text-align: center;
}
.h-cells i {
    flex: none;
    width: 1px;
    height: 6px;
    margin: 4px 9px 4px 10px;
    background: #666;
}
.indent {
    position: absolute;
}
.indent.first {
    left: 17px;
    top: -4px;
}
.indent.last {
    right: -6px;
    top: 6px;
}
.tab-stops {
    flex: none;
    width: 633px;
    height: 2px;
    margin: 1px 0 19px 5px;
    background: repeating-linear-gradient(90deg, #666 0 1px, transparent 1px 30px);
}
.paper {
    flex: none;
    width: 841px;
    padding: 77px 75px 0 77px;
    background: #fff;
    border: 1px solid #b9bdc1;
    box-shadow: 0 0 4px #ccc;
    color: #000;
    font: 15px/23px "Liberation Serif", "Noto Sans CJK SC", serif;
    font-feature-settings: "halt";
    white-space: nowrap;
}
.crops {
    display: flex;
    justify-content: space-between;
    margin: 0 -25px 0 -26px;
}
.crops i {
    width: 26px;
    height: 26px;
    border: solid #999;
    border-width: 0 1px 1px 0;
}
.crops i + i {
    border-width: 0 0 1px 1px;
}
.paper h2 {
    margin: 3px 0 0;
    padding-left: 8px;
    text-align: center;
    font-size: 21px;
    font-weight: 500;
    line-height: 32px;
}
.paper h2 .m {
    font-size: 21px;
    font-weight: 700;
}
.paper h3 {
    margin: 2px 0 3px;
    font-size: 15px;
    line-height: 23px;
}
.question {
    position: relative;
    margin-bottom: 8px;
    padding-left: 21px;
}
.question::before {
    content: "";
    position: absolute;
    left: -10px;
    top: 18px;
    bottom: 11px;
    width: 7px;
    border: 1px dotted #999;
    border-width: 0 0 1px 1px;
}
.question::after {
    content: "";
    position: absolute;
    left: -13px;
    top: 11px;
    width: 6px;
    height: 6px;
    border-radius: 50%;
    background: #999;
}
.paper p {
    position: relative;
    margin: 0;
    height: 23px;
}
.paper p.tall {
    height: 36px;
    line-height: 36px;
}
.paper p.full {
    text-align-last: justify;
}
.num {
    position: absolute;
    left: -16px;
}
.m {
    color: #7030a0;
    font-family: "Liberation Serif", "DejaVu Serif", "DejaVu Sans", serif;
}
.m i {
    font-size: 16px;
}
.paper sub, .paper sup {
    font-size: 10px;
    line-height: 0;
}
.paper sub {
    vertical-align: -3px;
}
.paper sup {
    vertical-align: 6px;
}
.paper sub i {
    font-size: 11px;
}
.paper s {
    text-decoration: none;
    font: bold 12px/12px "DejaVu Sans", sans-serif;
    vertical-align: -2px;
}
.frac {
    display: inline-flex;
    flex-direction: column;
    vertical-align: middle;
    text-align: center;
    line-height: 15px;
    text-align-last: center;
}
.frac > span {
    padding: 0 3px;
}
.frac > span:first-child {
    border-bottom: 1px solid #7030a0;
}
.root {
    position: relative;
    display: inline-block;
    padding-left: 10px;
    line-height: 15px;
}
.root > svg {
    position: absolute;
    left: 0;
    top: 0;
    width: 10px;
    height: 100%;
    fill: none;
    stroke: #7030a0;
}
.root > span {
    display: block;
    border-top: 1px solid #7030a0;
}
.big-root {
    vertical-align: middle;
    line-height: 31px;
    height: 33px;
}
.big-root .high {
    vertical-align: 13px;
}
.paren {
    font-size: 26px;
    line-height: 0;
    vertical-align: -4px;
}
.options {
    display: grid;
    grid-template-columns: repeat(4, 24%);
    height: 33px;
    margin: 0;
    padding: 0 0 0 2px;
    list-style: none;
    line-height: 33px;
}
.options .m {
    margin-left: 2px;
}
.with-figure {
    display: flex;
    justify-content: space-between;
}
.figure {
    margin: 15px 34px 0 0;
}
.figure text {
    font: italic 16px "Liberation Serif", serif;
    fill: #000;
    stroke: none;
}
.figure .p {
    fill: #7030a0;
}
.figure .s {
    font: 11px "Liberation Serif", serif;
}
.scroll {
    width: 22px;
    flex: none;
    padding: 5px 2px 0 4px;
}
.split {
    height: 5px;
    background: #a0a0a3;
    margin-bottom: 2px;
}
.scroll button {
    width: 16px;
    height: 16px;
    display: flex;
    align-items: center;
    justify-content: center;
    border: 1px solid #b5b5b8;
}
.thumb {
    height: 21px;
    margin-top: 1px;
    border: 1px solid #b5b5b8;
}

/* 状态栏 */
.status {
    position: relative;
    display: flex;
    align-items: center;
    flex: none;
    height: 21px;
    padding: 3px 0 0 8px;
    background: #1067ab;
    color: #fff;
    line-height: 14px;
    white-space: nowrap;
}
.page-no {
    width: 353px;
}
.position {
    display: flex;
    gap: 17px;
    width: 479px;
    padding-left: 5px;
    border: solid #7fb0d6;
    border-width: 0 1px;
}
.position span:first-child {
    margin-right: -6px;
}
.state {
    display: flex;
    margin-left: auto;
}
.state span {
    padding: 0 4px 0 5px;
    border-left: 1px solid #7fb0d6;
}
.state .style-name {
    border: none;
    padding-right: 16px;
}
.minus {
    width: 6px;
    height: 2px;
    margin: 0 9px 0 14px;
    background: #fff;
}
.zoom-bar {
    appearance: none;
    width: 157px;
    height: 10px;
    margin: 0 1px 0 0;
    background: linear-gradient(#fff, #fff) center / 100% 2px no-repeat;
}
.zoom-bar::-webkit-slider-thumb {
    appearance: none;
    width: 3px;
    height: 10px;
    background: #fff;
}
.zoom-value {
    width: 62px;
    height: 18px;
    margin-right: 4px;
    padding: 5px 6px 0;
    border: 1px solid #999;
    background: #fff;
    color: #333;
    font: 13px/13px "Liberation Sans", sans-serif;
}
.blank {
    position: absolute;
    right: 5px;
    bottom: 5px;
    width: 118px;
    height: 46px;
    background: #fff;
}
```
